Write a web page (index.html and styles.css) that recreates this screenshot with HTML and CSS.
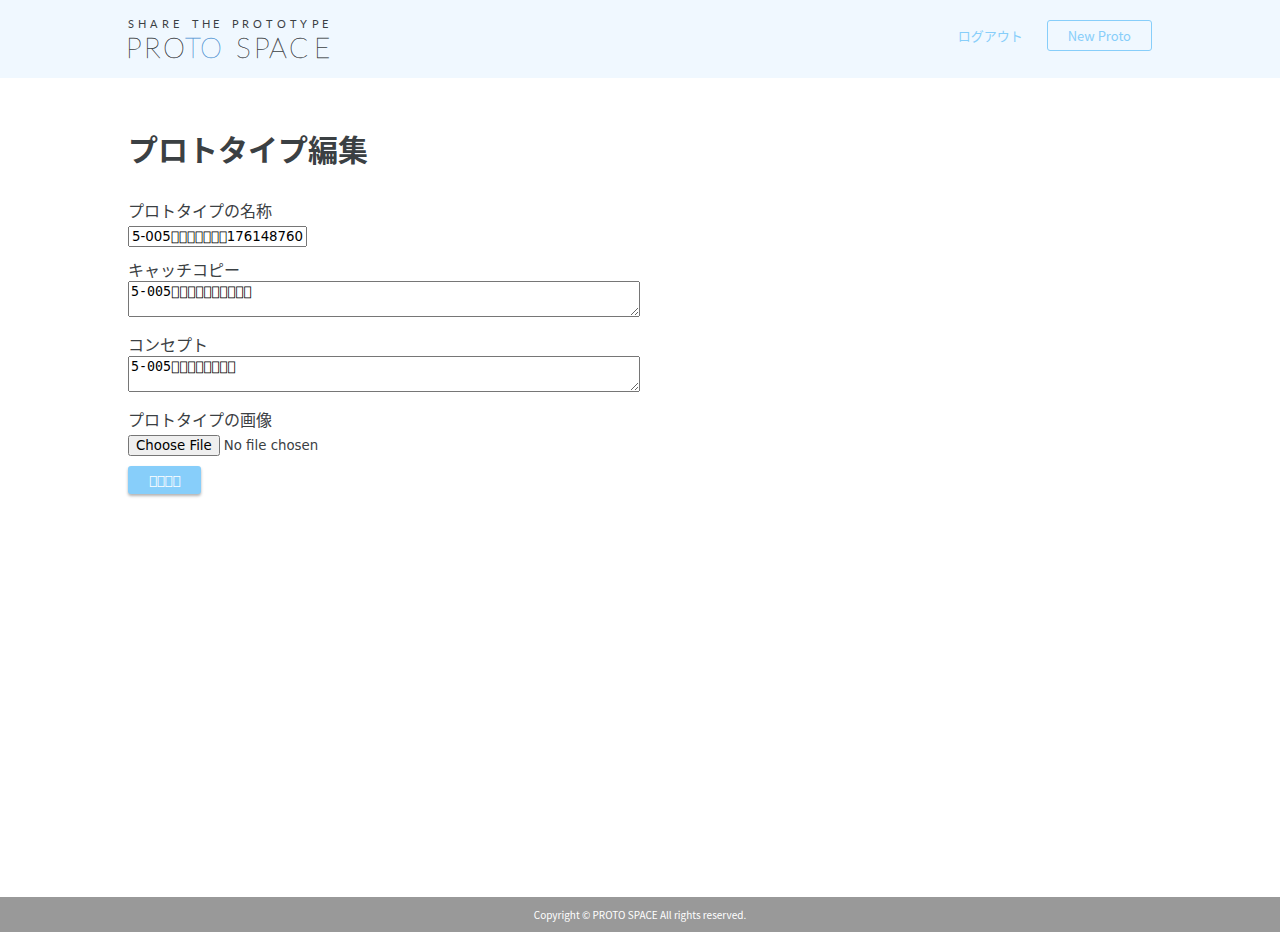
FILE: index.html
```html
<!DOCTYPE html>
<html lang="ja">
<head>
<meta charset="utf-8">
<title>PROTO SPACE</title>
<link rel="stylesheet" href="styles.css">
</head>
<body>
<header class="header">
  <a class="logo" href="#" aria-label="PROTO SPACE">
    <svg class="logo-art" width="201" height="38" viewBox="0 0 201 38">
      <text class="logo-tagline" y="8"><tspan x="0 10 22 34 45">SHARE</tspan><tspan x="64 74 85">THE</tspan><tspan x="104 114 125 138 149 162 172 184 194">PROTOTYPE</tspan></text>
      <text class="logo-name" y="38"><tspan x="-2 16 35">PRO</tspan><tspan class="logo-accent" x="57 72">TO</tspan><tspan x="108 126 141 161 186">SPACE</tspan></text>
    </svg>
  </a>
  <nav class="nav">
    <a class="nav-link" href="#">ログアウト</a>
    <a class="nav-button" href="#">New Proto</a>
  </nav>
</header>
<main class="main">
  <h1 class="title">プロトタイプ編集</h1>
  <form class="form">
    <div class="field field-name">
      <label class="label" for="name">プロトタイプの名称</label>
      <input class="input" id="name" type="text" value="5-005&#xE000;&#xE000;&#xE000;&#xE000;&#xE000;&#xE000;&#xE000;176148760">
    </div>
    <div class="field">
      <label class="label" for="catch">キャッチコピー</label>
      <textarea class="textarea" id="catch" rows="2">5-005&#xE000;&#xE000;&#xE000;&#xE000;&#xE000;&#xE000;&#xE000;&#xE000;&#xE000;&#xE000;</textarea>
    </div>
    <div class="field">
      <label class="label" for="concept">コンセプト</label>
      <textarea class="textarea" id="concept" rows="2">5-005&#xE000;&#xE000;&#xE000;&#xE000;&#xE000;&#xE000;&#xE000;&#xE000;</textarea>
    </div>
    <div class="field field-image">
      <label class="label" for="image">プロトタイプの画像</label>
      <input class="file" id="image" type="file">
    </div>
    <button class="submit" type="submit">&#xE000;&#xE000;&#xE000;&#xE000;</button>
  </form>
</main>
<footer class="footer">Copyright © PROTO SPACE All rights reserved.</footer>
</body>
</html>
```
FILE: styles.css
```css
* {
  box-sizing: border-box;
}

body {
  display: flex;
  flex-direction: column;
  min-height: 100vh;
  margin: 0;
  color: #3b4043;
  font-family: "Noto Sans CJK JP", sans-serif;
  font-size: 16px;
  line-height: 22px;
}

.header {
  display: flex;
  justify-content: space-between;
  align-items: flex-start;
  padding: 20px 10%;
  background: #f0f8ff;
}

.logo-art {
  display: block;
  overflow: visible;
  fill: #3b4043;
  stroke: #3b4043;
}

.logo-tagline {
  font-family: "Lato", sans-serif;
  font-size: 11px;
  stroke: none;
}

.logo-name {
  font-family: "Lato", sans-serif;
  font-size: 28px;
  font-weight: 100;
  stroke-width: 0.3;
}

.logo-accent {
  fill: #5b9bd5;
  stroke: #5b9bd5;
}

.nav {
  display: flex;
  align-items: center;
  gap: 24px;
  font-size: 13px;
  line-height: 19px;
}

.nav-link,
.nav-button {
  color: #87cefa;
  text-decoration: none;
}

.nav-button {
  padding: 5px 20px;
  border: 1px solid #87cefa;
  border-radius: 3px;
}

.main {
  flex: 1;
  padding: 48px 10%;
}

.title {
  margin: 0 0 29px;
  font-size: 30px;
  line-height: 44px;
}

.form {
  display: flex;
  flex-direction: column;
  align-items: flex-start;
}

.field {
  display: flex;
  flex-direction: column;
  align-items: flex-start;
  gap: 1px;
  width: 50%;
  margin-bottom: 16px;
}

.field-name {
  gap: 5px;
  margin-bottom: 11px;
}

.field-image {
  gap: 5px;
  margin-bottom: 10px;
}

.input,
.file,
.file::file-selector-button {
  font-family: "DejaVu Sans", sans-serif;
}

.textarea {
  width: 100%;
  font-family: "DejaVu Sans Mono", monospace;
}

.submit {
  height: 28px;
  padding: 0 21px;
  border: 0;
  border-radius: 3px;
  background: #87cefa;
  box-shadow: 0 2px 3px rgba(0, 0, 0, 0.3);
  color: #fff;
  font-family: "DejaVu Sans", sans-serif;
  font-size: 13px;
}

.footer {
  padding: 8px 0 7px;
  background: #999;
  color: #fff;
  font-size: 10px;
  line-height: 20px;
  text-align: center;
}
```
